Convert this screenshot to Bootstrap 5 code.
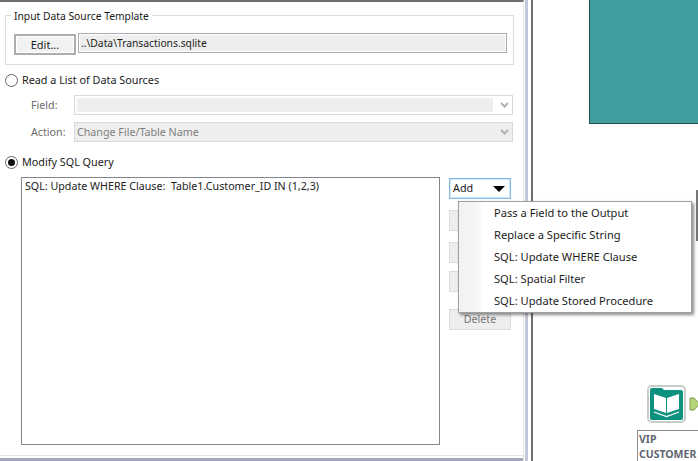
<!DOCTYPE html>
<html lang="en">
<head>
<meta charset="utf-8">
<title>Dynamic Input</title>
<link href="https://cdn.jsdelivr.net/npm/bootstrap@5.3.0/dist/css/bootstrap.min.css" rel="stylesheet">
<style>
html,body{margin:0;height:461px;overflow:hidden;background:#fff}
body{font-family:"Noto Sans","Open Sans",sans-serif;font-size:10.7px;line-height:14px;color:#1a1a1a;width:698px;position:relative}
.shell{height:461px;width:698px}
.pane{width:524px;height:461px;border-top:2px solid #6e6e6e;border-right:1px solid #e3e3e3;padding:13px 10px 0 5px;position:relative;flex:none}
.pane-foot{position:absolute;left:0;right:0;bottom:0;height:6px;border-top:1px solid #e3e3e3;border-bottom:3px solid #a4a6bd;background:#fff}
.split{width:8px;flex:none;background:#fff;border-left:3px solid #c3c6d8;border-right:2px solid #6f6f6f;margin-left:1px;height:461px;box-sizing:border-box}
.canvas{flex:1;position:relative;height:461px;overflow:hidden}
.tpl{border:1px solid #dcdcdc;height:50px;padding:18px 6px 0 8px;position:relative;width:509px}
.tpl-title{position:absolute;left:5px;top:-7px;background:#fff;padding:0 3px;font-size:10.3px;white-space:nowrap}
.edit-btn{width:62px;height:21px;border:2px solid #adadad;background:#f2f2f2;box-shadow:inset 0 0 0 1px #fff;font-size:11px;line-height:15px;padding:0;color:#1a1a1a;border-radius:0;flex:none}
.path-box{flex:1;height:20px;margin-left:2px;border:1px solid #a9a9b0;background:#eee;box-shadow:inset 0 0 0 1px #fff;padding:1px 2px;margin-top:-1px;line-height:16px;color:#222;font-size:10.3px}
.rad{width:13px;height:13px;border:1px solid #666;border-radius:50%;background:#fff;flex:none;display:flex;align-items:center;justify-content:center}
.rad-on::after{content:"";width:7px;height:7px;border-radius:50%;background:#111}
.rad-row{height:14px;gap:4px;font-size:10.8px}
.fld{margin-left:26px;width:482px;height:20px}
.fld-name{width:43px;color:#6d6d6d;flex:none}
.sel{flex:1;height:20px;border:1px solid #d9d9d9;background:#fff;padding:2px;position:relative;color:#808080;line-height:14px}
.sel-fill{background:#eee;height:100%;width:416px;padding-left:1px}
.sel-full{background:#eee;padding:2px 2px}
.chev{position:absolute;right:3px;top:6px}
.query{margin-left:16px;gap:9px}
.lst{width:419px;height:268px;border:1px solid #84848c;padding:1px 3px;color:#222;white-space:pre;flex:none}
.side{width:62px;flex:none;padding-top:1px}
.add-btn{height:21px;width:62px;border:1px solid #7eb8ea;box-shadow:inset 0 0 0 1px #d5e8f8;background:#fff;padding:0 3px;position:relative;line-height:18px;font-size:10.8px}
.tri{position:absolute;right:5px;top:7px;width:0;height:0;border-left:6px solid transparent;border-right:6px solid transparent;border-top:6px solid #000}
.ghost{height:21px;width:62px;background:#eee;border:1px solid #dcdcdc;color:#777;text-align:center;line-height:19px;display:block}
.g1{margin-top:11px}.g2{margin-top:11px}.g3{margin-top:8px}.g4{margin-top:17px}
.pop{position:absolute;left:458px;top:201px;width:234px;height:112px;background:#fff;border:1px solid #a0a0a0;box-shadow:2px 2px 3px rgba(0,0,0,.45);padding:0;z-index:5}
.pop-gutter{position:absolute;left:0;top:0;bottom:0;width:24px;background:linear-gradient(90deg,#f2f2f2,#f7f7f7 80%,#fff)}
.pop-item{height:22px;line-height:22px;padding-left:35px;font-size:11.15px;color:#1c1c1c;position:relative;white-space:nowrap}
.teal-block{position:absolute;left:56px;top:-1px;right:-2px;height:125px;background:#409f9e;border:1px solid #274e50}
.node-ico{position:absolute;left:114px;top:385px}
.anchor{position:absolute;left:156px;top:397px}
.node-label{position:absolute;left:104px;top:430px;width:70px;height:40px;border:1px solid #8a8a8a;background:#fff;font-weight:700;font-size:10.5px;line-height:15px;color:#5f6670;padding:1px 1px;white-space:nowrap}
.edge-mark{position:absolute;right:0;top:190px;width:2px;height:51px;background:#777}
</style>
</head>
<body>
<div class="shell d-flex">
  <div class="pane">
    <div class="tpl">
      <div class="tpl-title">Input Data Source Template</div>
      <div class="d-flex">
        <button type="button" class="btn edit-btn">Edit...</button>
        <div class="path-box">..\Data\Transactions.sqlite</div>
      </div>
    </div>
    <div class="d-flex align-items-center rad-row mt-2"><span class="rad"></span><span>Read a List of Data Sources</span></div>
    <div class="fld d-flex align-items-center" style="margin-top:8px">
      <span class="fld-name">Field:</span>
      <div class="sel"><div class="sel-fill"></div>
        <svg class="chev" width="9" height="6" viewBox="0 0 9 6"><path d="M1 1l3.5 3.5L8 1" fill="none" stroke="#b0b0b0" stroke-width="2"/></svg></div>
    </div>
    <div class="fld d-flex align-items-center" style="margin-top:7px">
      <span class="fld-name">Action:</span>
      <div class="sel sel-full">Change File/Table Name
        <svg class="chev" width="9" height="6" viewBox="0 0 9 6"><path d="M1 1l3.5 3.5L8 1" fill="none" stroke="#b0b0b0" stroke-width="2"/></svg></div>
    </div>
    <div class="d-flex align-items-center rad-row" style="margin-top:13px"><span class="rad rad-on"></span><span>Modify SQL Query</span></div>
    <div class="query d-flex" style="margin-top:8px">
      <div class="lst">SQL: Update WHERE Clause:  Table1.Customer_ID IN (1,2,3)</div>
      <div class="side">
        <div class="add-btn">Add<span class="tri"></span></div>
        <span class="ghost g1"></span>
        <span class="ghost g2"></span>
        <span class="ghost g3"></span>
        <span class="ghost g4">Delete</span>
      </div>
    </div>
    <div class="pane-foot"></div>
  </div>
  <div class="split"></div>
  <div class="canvas">
    <div class="teal-block"></div>
    <div class="edge-mark"></div>
    <svg class="node-ico" width="39" height="38" viewBox="0 0 39 38">
      <rect x="1" y="1" width="37" height="36" rx="4" fill="#fff" stroke="#c6cdcb" stroke-width="2"/>
      <path d="M3 5a2 2 0 0 1 2-2h10l2 2h17a2 2 0 0 1 2 2v26a2 2 0 0 1-2 2H5a2 2 0 0 1-2-2z" fill="#0d917f"/>
      <path d="M7 9l12 4v15L7 24z" fill="#fff"/>
      <path d="M32 9l-12 4v15l12-4z" fill="#fff"/>
      <path d="M7 27l12.500 4.500L32 27" fill="none" stroke="#fff" stroke-width="1.300"/>
    </svg>
    <svg class="anchor" width="12" height="14" viewBox="0 0 12 14">
      <path d="M1 1h4l4.500 5v2L5 13H1z" fill="#b4d57a" stroke="#7f9a55"/>
      <rect x="9.500" y="6" width="2.500" height="2" fill="#e33"/>
    </svg>
    <div class="node-label">VIP<br>CUSTOMER</div>
  </div>
</div>
<div class="pop">
  <div class="pop-gutter"></div>
  <div class="pop-item">Pass a Field to the Output</div>
  <div class="pop-item">Replace a Specific String</div>
  <div class="pop-item">SQL: Update WHERE Clause</div>
  <div class="pop-item">SQL: Spatial Filter</div>
  <div class="pop-item">SQL: Update Stored Procedure</div>
</div>
<script src="https://cdn.jsdelivr.net/npm/bootstrap@5.3.0/dist/js/bootstrap.bundle.min.js"></script>
</body>
</html>
